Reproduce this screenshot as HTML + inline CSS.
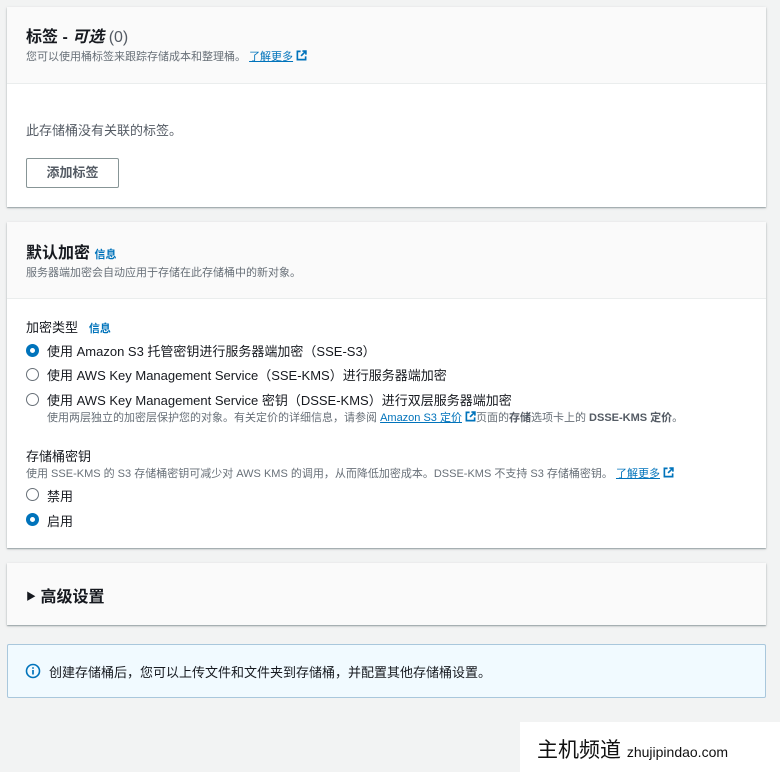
<!DOCTYPE html>
<html><head><meta charset="utf-8"><style>
*{margin:0;padding:0;box-sizing:border-box}
body{width:780px;height:772px;background:#f2f3f3;font-family:"Liberation Sans","Noto Sans CJK SC",sans-serif;color:#16191f;position:relative;overflow:hidden}
.card{position:absolute;left:7px;width:759px;background:#fff;box-shadow:0 1px 1px rgba(0,28,36,.3),0 1px 3px rgba(0,28,36,.15);}
.hd{background:#fafafa;border-bottom:1px solid #eaeded}
.a{position:absolute;white-space:nowrap}
.h2{font-size:16px;font-weight:bold}
.sm{font-size:11px;color:#687078}
.lk{color:#0073bb;text-decoration:underline}
.info{color:#0073bb;font-size:11px;font-weight:bold}
.t{font-size:13px}
.r{position:absolute;width:13px;height:13px;border-radius:50%;border:1.5px solid #687078;background:#fff}
.r.on{border:4px solid #0073bb}
.ext{display:inline-block;width:11px;height:11px;vertical-align:-1px;margin-left:3px}
</style></head><body>
<svg width="0" height="0" style="position:absolute"><defs><symbol id="e" viewBox="0 0 12 12"><path d="M5 1.5H1.5v9h9V7" fill="none" stroke="#0073bb" stroke-width="1.8"/><path d="M7 1.2h3.8V5M10.8 1.2 5.5 6.5" fill="none" stroke="#0073bb" stroke-width="1.8"/></symbol></defs></svg>

<div class="card" style="top:7px;height:200px">
 <div class="hd" style="height:77px"></div>
 <div class="a h2" style="left:19px;top:16px">标签 - <i>可选</i> <span style="font-weight:normal;color:#545b64">(0)</span></div>
 <div class="a sm" style="left:19px;top:41px">您可以使用桶标签来跟踪存储成本和整理桶。 <span class="lk">了解更多</span><svg class="ext"><use href="#e"/></svg></div>
 <div class="a t" style="left:19px;top:113px;color:#545b64">此存储桶没有关联的标签。</div>
 <div class="a" style="left:19px;top:151px;width:93px;height:30px;border:1px solid #879596;border-radius:2px;font-size:13px;font-weight:bold;color:#545b64;text-align:center;line-height:28px">添加标签</div>
</div>

<div class="card" style="top:222px;height:326px">
 <div class="hd" style="height:77px"></div>
 <div class="a h2" style="left:19px;top:17px">默认加密 <span class="info">信息</span></div>
 <div class="a sm" style="left:19px;top:42px">服务器端加密会自动应用于存储在此存储桶中的新对象。</div>
 <div class="a t" style="left:19px;top:95px;color:#16191f">加密类型 &nbsp;&nbsp;<span class="info">信息</span></div>
 <div class="r on" style="left:19px;top:122px"></div><div class="a t" style="left:40px;top:119px">使用 Amazon S3 托管密钥进行服务器端加密（SSE-S3）</div>
 <div class="r" style="left:19px;top:146px"></div><div class="a t" style="left:40px;top:143px">使用 AWS Key Management Service（SSE-KMS）进行服务器端加密</div>
 <div class="r" style="left:19px;top:171px"></div><div class="a t" style="left:40px;top:168px">使用 AWS Key Management Service 密钥（DSSE-KMS）进行双层服务器端加密</div>
 <div class="a sm" style="left:40px;top:187px">使用两层独立的加密层保护您的对象。有关定价的详细信息，请参阅 <span class="lk">Amazon S3 定价</span><svg class="ext"><use href="#e"/></svg>页面的<b style="color:#545b64">存储</b>选项卡上的 <b style="color:#545b64">DSSE-KMS 定价</b>。</div>
 <div class="a t" style="left:19px;top:224px">存储桶密钥</div>
 <div class="a sm" style="left:19px;top:243px">使用 SSE-KMS 的 S3 存储桶密钥可减少对 AWS KMS 的调用，从而降低加密成本。DSSE-KMS 不支持 S3 存储桶密钥。 <span class="lk">了解更多</span><svg class="ext"><use href="#e"/></svg></div>
 <div class="r" style="left:19px;top:266px"></div><div class="a t" style="left:40px;top:264px">禁用</div>
 <div class="r on" style="left:19px;top:291px"></div><div class="a t" style="left:40px;top:289px">启用</div>
</div>

<div class="card" style="top:563px;height:62px;background:#fafafa">
 <div class="a" style="left:19px;top:20px;font-size:16px;font-weight:bold"><span style="font-size:10px;vertical-align:2px">▶</span> 高级设置</div>
</div>

<div class="a" style="left:7px;top:644px;width:759px;height:54px;background:#f1faff;border:1px solid #a9c7dc;border-radius:2px">
 <svg class="a" style="left:17px;top:18px" width="16" height="16" viewBox="0 0 16 16"><circle cx="8" cy="8" r="6.5" fill="none" stroke="#0073bb" stroke-width="1.6"/><path d="M8 7v4.5M8 4.3v1.4" stroke="#0073bb" stroke-width="1.7"/></svg>
 <div class="a t" style="left:41px;top:17px">创建存储桶后，您可以上传文件和文件夹到存储桶，并配置其他存储桶设置。</div>
</div>

<div class="a" style="left:520px;top:722px;width:260px;height:50px;background:#fff">
 <div class="a" style="left:17px;top:12px;font-size:21px;color:#111">主机频道 <span style="font-size:14px">zhujipindao.com</span></div>
</div>
</body></html>
